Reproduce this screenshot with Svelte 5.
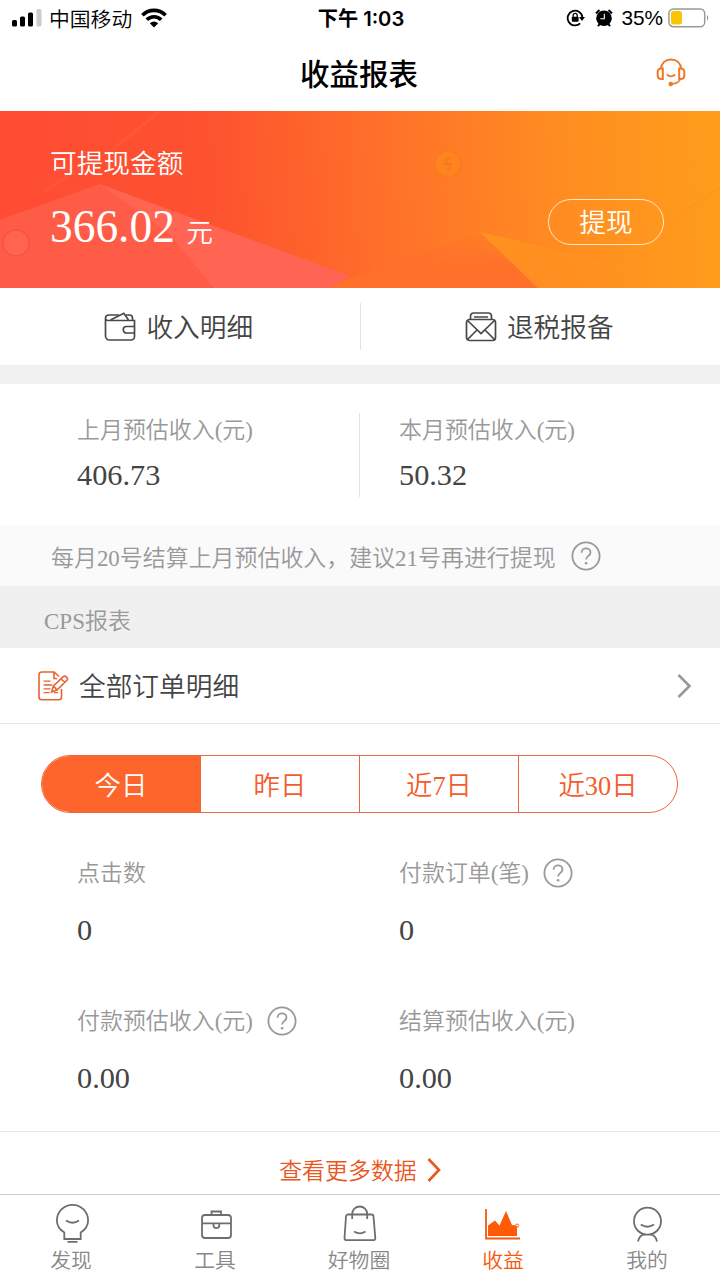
<script lang="ts">
	interface Stat {
		label: string;
		value: string;
		help?: boolean;
	}

	const periods = ['今日', '昨日', '近7日', '近30日'];
	let activePeriod = $state('今日');

	const estimates: Stat[] = [
		{ label: '上月预估收入(元)', value: '406.73' },
		{ label: '本月预估收入(元)', value: '50.32' }
	];

	const stats: Stat[] = [
		{ label: '点击数', value: '0' },
		{ label: '付款订单(笔)', value: '0', help: true },
		{ label: '付款预估收入(元)', value: '0.00', help: true },
		{ label: '结算预估收入(元)', value: '0.00' }
	];

	const navItems = [
		{ id: 'discover', label: '发现' },
		{ id: 'tools', label: '工具' },
		{ id: 'goods', label: '好物圈' },
		{ id: 'income', label: '收益' },
		{ id: 'mine', label: '我的' }
	];
	let activeNav = $state('income');
</script>

{#snippet helpIcon()}
	<svg class="help" width="30" height="30" viewBox="0 0 30 30" fill="none" stroke="#999" stroke-width="1.8">
		<circle cx="15" cy="15" r="13.6" />
		<path d="M10.6 11.7c0-2.7 1.9-4.3 4.4-4.3s4.5 1.6 4.5 4c0 3.3-4.4 3.6-4.4 7.2" />
		<circle cx="15.1" cy="22.3" r="1.3" fill="#999" stroke="none" />
	</svg>
{/snippet}

<div class="page">
	<div class="status-bar">
		<div class="carrier">
			<svg width="30" height="18" viewBox="0 0 30 18">
				<rect x="0" y="11" width="5" height="6.5" rx="1.5" />
				<rect x="8" y="7.5" width="5" height="10" rx="1.5" />
				<rect x="16" y="3.5" width="5" height="14" rx="1.5" />
				<rect x="24.5" y="0" width="5" height="17.5" rx="1.5" fill="#ccc" />
			</svg>
			<span>中国移动</span>
			<svg class="wifi" width="26" height="20" viewBox="0 0 26 20" fill="none" stroke="#000" stroke-width="3.6">
				<path d="M1.4 7.2c6.5-6.5 16.7-6.5 23.2 0" />
				<path d="M5.8 11.8c4-4.1 10.4-4.1 14.4 0" />
				<path d="M8.8 15.3q4.2-3.4 8.4 0L13 19.6z" fill="#000" stroke="none" />
			</svg>
		</div>
		<span class="time">下午 1:03</span>
		<div class="battery">
			<svg width="20" height="18" viewBox="0 0 20 18" fill="none" stroke="#000" stroke-width="1.8">
				<path d="M14.2 14.4A7.4 7.4 0 1 1 16.4 8" />
				<path d="M13 8h6l-3 4z" fill="#000" stroke="none" />
				<rect x="5.8" y="7.8" width="6.8" height="5" rx="0.8" fill="#000" stroke="none" />
				<path d="M7.2 8V6.3a2 2 0 0 1 4 0V8" stroke-width="1.3" />
			</svg>
			<svg class="alarm" width="18" height="18" viewBox="0 0 18 18">
				<circle cx="9" cy="9.3" r="7.8" />
				<path d="M1 4.5 4.500 1M17 4.500 13.500 1M3 17.200l2-2.700M15 17.200l-2-2.700" stroke="#000" stroke-width="2" />
				<path d="M9.3 4.8V9.700H5.300" fill="none" stroke="#fff" stroke-width="1.1" />
			</svg>
			<span>35%</span>
			<svg width="42" height="20" viewBox="0 0 42 20">
				<rect x="0.9" y="0.9" width="35.8" height="17.8" rx="4.5" fill="none" stroke="#999" stroke-width="1.5" />
				<rect x="3" y="3" width="11" height="13.5" rx="2.5" fill="#fbc400" />
				<path d="M39 6.8q2.5 3 0 6z" fill="#999" />
			</svg>
		</div>
	</div>

	<header>
		<h1>收益报表</h1>
		<button class="service" aria-label="客服">
			<svg width="30" height="30" viewBox="0 0 30 30" fill="none" stroke="#ec7a26" stroke-width="2">
				<path d="M4.8 11C5.5 5 9.5 1.5 15 1.5S24.700 5 25.200 11" />
				<path d="M6.8 10.5v10.500H5.500c-2.500 0-3.800-1.500-3.800-3.500v-3.500c0-2 1.300-3.500 3.800-3.500zM23.200 10.500v10.500h1.300c2.500 0 3.800-1.500 3.800-3.500v-3.500c0-2-1.300-3.500-3.800-3.500z" />
				<path d="M10.8 16.500q4.200 3.600 8.400 0M24.300 21c-1 3-4.300 4.500-8.300 5" stroke-width="1.7" />
				<circle cx="14.8" cy="26" r="2.3" fill="#ec7a26" stroke="none" />
			</svg>
		</button>
	</header>

	<section class="balance">
		<svg class="balance-bg" width="720" height="177" viewBox="0 0 720 177">
			<defs>
				<linearGradient id="base" gradientUnits="userSpaceOnUse" x1="0" y1="88" x2="720" y2="40">
					<stop offset="0" stop-color="#ff4c33" />
					<stop offset="0.28" stop-color="#fd5130" />
					<stop offset="0.42" stop-color="#fe622b" />
					<stop offset="0.53" stop-color="#ff702a" />
					<stop offset="0.8" stop-color="#ff8f20" />
					<stop offset="1" stop-color="#ff9d1b" />
				</linearGradient>
				<linearGradient id="slope-fade" x1="0" y1="0" x2="0" y2="1">
					<stop offset="0" stop-color="#ff712b" stop-opacity="0" />
					<stop offset="0.6" stop-color="#ff712b" />
				</linearGradient>
				<linearGradient id="ray" x1="0" y1="0" x2="1" y2="0.3">
					<stop offset="0" stop-color="#ff941f" />
					<stop offset="1" stop-color="#ff941f" stop-opacity="0" />
				</linearGradient>
			</defs>
			<rect width="720" height="177" fill="url(#base)" />
			<path d="M325 177 480 121 538 177z" fill="url(#slope-fade)" />
			<path d="M480 121 720 177H538z" fill="url(#ray)" />
			<path d="M0 109 100 73 350 165 330 177H0z" fill="#ff6552" />
			<path d="M0 109 100 73 170 123 214 177H0z" fill="#ff5643" opacity="0.6" />
			<path d="M160 0 113 38M80 58 44 80" stroke="#ff7050" stroke-width="3" opacity="0.25" />
			<path d="M670 110 720 76" stroke="#f48a12" opacity="0.35" />
			<circle cx="16" cy="132" r="13" fill="#ff6450" stroke="#f95242" stroke-width="1.5" />
			<circle cx="448" cy="53" r="13" fill="#ff8420" stroke="#f97c1e" stroke-width="2" />
			<path d="m449 46-4 7h6l-3 7" fill="none" stroke="#f4741c" stroke-width="2" opacity="0.7" />
		</svg>
		<div class="balance-info">
			<span class="balance-label">可提现金额</span>
			<span class="amount">366.02 <small>元</small></span>
		</div>
		<button class="withdraw">提现</button>
	</section>

	<nav class="actions">
		<button>
			<svg width="32" height="30" viewBox="0 0 32 30" fill="none" stroke="#484848" stroke-width="1.7">
				<path d="M1.5 6.500V24a4 4 0 0 0 4 4H27a3.500 3.500 0 0 0 3.500-3.500V8.500H3.800A2.500 2.500 0 0 1 1.500 6.200 3.400 3.400 0 0 1 5 3h10" />
				<path d="M6.500 8 19.800 1.300 24.500 8M22 3h3.500a3 3 0 0 1 3 3v2.500M30.500 14.500h-8a3 3 0 0 0 0 6.500h8" />
			</svg>
			<span>收入明细</span>
		</button>
		<button>
			<svg width="32" height="30" viewBox="0 0 32 30" fill="none" stroke="#484848" stroke-width="1.7">
				<path d="M5.500 7V4a3 3 0 0 1 3-3h15a3 3 0 0 1 3 3v3M9 5h14" />
				<rect x="1.5" y="7.5" width="29" height="21" rx="3" />
				<path d="m2.500 8.500 13.500 13 13.500-13M2.500 27.500l9.500-9.500M29.500 27.500 20 18" />
			</svg>
			<span>退税报备</span>
		</button>
	</nav>

	<section class="estimates">
		{#each estimates as item (item.label)}
			<div class="estimate">
				<div class="label">{item.label}</div>
				<div class="value">{item.value}</div>
			</div>
		{/each}
	</section>

	<div class="notice">
		<span>每月20号结算上月预估收入，建议21号再进行提现</span>
		{@render helpIcon()}
	</div>

	<h2>CPS报表</h2>

	<button class="orders">
		<svg width="32" height="30" viewBox="0 0 32 30" fill="none" stroke="#e9622f" stroke-width="1.6">
			<path d="M24.500 18v8a2.800 2.800 0 0 1-2.800 2.800H4.800A2.800 2.800 0 0 1 2 26V3.800A2.800 2.800 0 0 1 4.800 1H17l5 4.500M17 1v6.500h3" />
			<path d="M6.500 10.200h7M6.500 14h9M6.500 17.800h7M6.500 21.600h6M17 21.600h4" stroke-width="1.3" />
			<path d="m14.500 21 2-6L26.300 5.700q1.400-1.200 2.800 0l1 1q1 1.400-.2 2.600L20 19zM16.500 15l3.500 4M24 8l4 3.500" />
		</svg>
		<span>全部订单明细</span>
		<svg class="chevron" width="15" height="24" viewBox="0 0 15 24" fill="none" stroke="#999" stroke-width="2.6">
			<path d="M1.5 1 12.500 12 1.500 23" />
		</svg>
	</button>

	<div class="periods">
		{#each periods as period (period)}
			<button class:active={period === activePeriod} onclick={() => (activePeriod = period)}>
				{period}
			</button>
		{/each}
	</div>

	<section class="stats">
		{#each stats as stat (stat.label)}
			<div class="stat">
				<div class="label">
					<span>{stat.label}</span>
					{#if stat.help}
						{@render helpIcon()}
					{/if}
				</div>
				<div class="value">{stat.value}</div>
			</div>
		{/each}
	</section>

	<button class="more">
		<span>查看更多数据</span>
		<svg width="14" height="24" viewBox="0 0 14 24" fill="none" stroke="#ea561d" stroke-width="2.6">
			<path d="M1.5 1 12 12 1.500 23" />
		</svg>
	</button>

	<nav class="tab-bar">
		{#each navItems as item (item.id)}
			<button class:active={item.id === activeNav} onclick={() => (activeNav = item.id)}>
				<svg width="40" height="40" viewBox="0 0 40 40" fill="none" stroke="#6e6e6e" stroke-width="1.8">
					{#if item.id === 'discover'}
						<path d="M13.300 36v-6.500C8.500 26.500 5.900 22.500 5.900 17.500a15.600 15.600 0 0 1 31.200 0c0 5-2.600 9-7.400 12V36z" />
						<path d="M15 17.500q6.500 4.500 13 0M16.500 38.800h10" />
					{:else if item.id === 'tools'}
						<rect x="7" y="12" width="29" height="23" rx="3" />
						<path d="M16.500 12V8.500h9.500V12M7 20.300h29M18.500 20.300v2a2.900 2.900 0 0 0 5.800 0v-2" />
					{:else if item.id === 'goods'}
						<path d="M8.500 11.500h24a2 2 0 0 1 2 2L36.300 35a2 2 0 0 1-2 2.200H7.500a2 2 0 0 1-2-2.200l1.500-21.500a2 2 0 0 1 1.500-2z" />
						<path d="M13.200 16v-5a7.500 7.500 0 0 1 15 0v5M15 28.500q6 3.800 11.500 0" />
					{:else if item.id === 'income'}
						<path d="M3 6v29.500H37" stroke="#f9570a" />
						<path d="M5 33V22.500l7-5 4.500 5 6.500-14.500 6 14 5 .5V33z" fill="#ff5a05" stroke="none" />
						<circle cx="34.200" cy="22.500" r="1.500" fill="#fff" stroke="#f9570a" stroke-width="1" />
					{:else}
						<circle cx="20.500" cy="18.200" r="13.500" />
						<path d="M13.800 21.500q6.500 4.500 13.200 0M11 38.500c.7-4 3.500-6.500 7-7.300M30 38.500c-.7-4-3.500-6.500-7-7.300" />
					{/if}
				</svg>
				<span>{item.label}</span>
			</button>
		{/each}
	</nav>
</div>

<style>
	.page {
		display: flex;
		flex-direction: column;
		box-sizing: border-box;
		width: 720px;
		height: 1280px;
		overflow: hidden;
		background: #fff;
		color: #444;
		font-family: 'Liberation Serif', 'Noto Sans CJK SC', sans-serif;
		font-size: 22.95px;
		font-weight: 350;
	}
	button {
		margin: 0;
		padding: 0;
		border: none;
		background: none;
		color: inherit;
		font: inherit;
		cursor: pointer;
	}
	svg {
		display: block;
		flex-shrink: 0;
	}
	.status-bar {
		display: grid;
		grid-template-columns: 1fr auto 1fr;
		align-items: center;
		height: 36px;
		padding: 0 10px 0 12px;
		color: #000;
		font-family: Inter, 'Noto Sans CJK SC', sans-serif;
		font-size: 20.8px;
	}
	.carrier, .battery {
		display: flex;
		align-items: center;
	}
	.carrier span {
		margin: -1px 9px 0 7px;
	}
	.time {
		margin-top: -1px;
		font-size: 20.2px;
		font-weight: 600;
	}
	.battery {
		justify-content: flex-end;
	}
	.alarm {
		margin: 0 8px 0 9px;
	}
	.battery span {
		margin-right: 5px;
		font-family: 'Liberation Sans', sans-serif;
	}
	header {
		display: grid;
		grid-template-columns: 1fr auto 1fr;
		align-items: center;
		height: 75px;
	}
	h1 {
		grid-column: 2;
		margin: 2px 2px 0 0;
		color: #000;
		font-size: 29.5px;
		font-weight: 500;
		line-height: 40px;
	}
	.service {
		justify-self: end;
		margin: -2px 34px 0 0;
	}
	.balance {
		position: relative;
		display: flex;
		justify-content: space-between;
		box-sizing: border-box;
		height: 177px;
		padding: 35px 56px 0 50px;
		color: #fff;
	}
	.balance-bg {
		position: absolute;
		inset: 0;
	}
	.balance-info {
		position: relative;
		display: flex;
		flex-direction: column;
		font-size: 26.7px;
		line-height: 36px;
	}
	.amount {
		margin-top: 15px;
		font-size: 45.4px;
		line-height: 60px;
	}
	.amount small {
		font-size: 26.7px;
	}
	.withdraw {
		position: relative;
		box-sizing: border-box;
		width: 116px;
		height: 46px;
		margin-top: 53px;
		padding-top: 1px;
		border: 1.5px solid #ffe8cc;
		border-radius: 23px;
		font-size: 26.7px;
		line-height: 42px;
	}
	.actions {
		display: flex;
		align-items: center;
		height: 77px;
		border-bottom: 19px solid #f1f1f1;
	}
	.actions button {
		display: flex;
		flex: 1;
		align-items: center;
		justify-content: center;
		gap: 10px;
		height: 47px;
		padding-right: 2px;
		font-size: 26.7px;
	}
	.actions button span {
		margin-top: -3px;
	}
	.actions button + button {
		border-left: 1px solid #e3e3e3;
	}
	.estimates {
		display: flex;
		align-items: center;
		height: 142px;
		padding-left: 77px;
	}
	.estimate {
		box-sizing: border-box;
		width: 282px;
		height: 84px;
	}
	.estimate + .estimate {
		padding-left: 39px;
		border-left: 1px solid #e3e3e3;
	}
	.label {
		display: flex;
		align-items: center;
		gap: 15px;
		height: 34px;
		color: #999;
		line-height: 34px;
	}
	.value {
		font-size: 30.3px;
		line-height: 34px;
	}
	.estimate .label {
		padding-top: 2px;
		height: 32px;
		line-height: 32px;
	}
	.estimate .value {
		margin-top: 11px;
	}
	.notice {
		display: flex;
		align-items: center;
		gap: 15px;
		height: 60px;
		padding-left: 51px;
		background: #fafafa;
		color: #999;
	}
	h2 {
		height: 62px;
		margin: 0;
		padding-left: 44px;
		background: #f0f0f0;
		color: #999;
		font-size: 23px;
		font-weight: 350;
		line-height: 71px;
	}
	.orders {
		display: flex;
		align-items: center;
		box-sizing: border-box;
		height: 76px;
		padding: 0 28px 0 37px;
		border-bottom: 1px solid #e6e6e6;
		font-size: 26.7px;
	}
	.orders span {
		margin: -2px 0 0 10px;
	}
	.chevron {
		margin-left: auto;
	}
	.periods {
		display: flex;
		box-sizing: border-box;
		height: 58px;
		margin: 31px 42px 0 41px;
		overflow: hidden;
		border: 1px solid #e8683c;
		border-radius: 29px;
		color: #f35d2c;
		font-size: 26.4px;
	}
	.periods button {
		flex: 1;
		padding-bottom: 2px;
	}
	.periods button + button {
		border-left: 1px solid #e8683c;
	}
	.periods .active {
		background: #fe652c;
		color: #fff;
	}
	.stats {
		display: grid;
		grid-template-columns: 322px 1fr;
		grid-auto-rows: 148px;
		box-sizing: border-box;
		height: 319px;
		padding: 43px 0 0 77px;
		border-bottom: 1px solid #e6e6e6;
	}
	.stat .label {
		gap: 14px;
	}
	.stat .label span {
		margin-top: 1px;
	}
	.stat .value {
		margin-top: 23px;
	}
	.more {
		display: flex;
		align-items: center;
		justify-content: center;
		gap: 10px;
		height: 62px;
		padding-top: 14px;
		box-sizing: border-box;
		color: #ea561d;
	}
	.more span {
		margin-top: -3px;
	}
	.tab-bar {
		display: flex;
		box-sizing: border-box;
		height: 86px;
		border-top: 1px solid #ccc;
	}
	.tab-bar button {
		display: flex;
		flex: 1;
		flex-direction: column;
		align-items: center;
		padding: 8px 2px 0 0;
		color: #888;
		font-size: 20.8px;
		line-height: 36px;
	}
	.tab-bar .active {
		color: #f9570a;
	}
</style>
